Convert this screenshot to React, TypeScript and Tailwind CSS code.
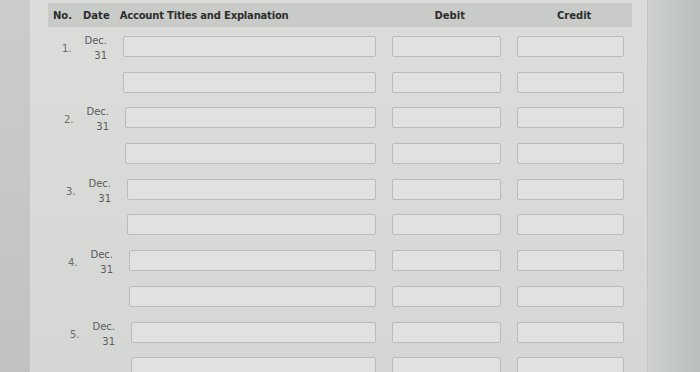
import React from "react";

type Entry = { no: string; shift: string; acct: string };

// the photo is slightly skewed: lower rows start a few px further right
const entries: Entry[] = [
  { no: "1.", shift: "pl-0", acct: "w-[253px]" },
  { no: "2.", shift: "pl-[2px]", acct: "w-[251px]" },
  { no: "3.", shift: "pl-[4px]", acct: "w-[249px]" },
  { no: "4.", shift: "pl-[6px]", acct: "w-[247px]" },
  { no: "5.", shift: "pl-[8px]", acct: "w-[245px]" },
];

function Box({ w }: { w: string }) {
  return (
    <div
      className={`${w} h-[21px] shrink-0 rounded-[2px] border border-[#b9bcb8] bg-[#e1e2df]`}
    />
  );
}

function Line({ entry, first }: { entry: Entry; first: boolean }) {
  return (
    <div className="flex h-[35.7px] items-start">
      <div className={`flex shrink-0 items-start ${entry.shift}`}>
        <div className="w-[39px] pt-[8px] pl-[31px] text-[10px] text-[#6a6c6a]">
          {first ? entry.no : ""}
        </div>
        <div className="flex w-[37px] flex-col items-end text-[10px] leading-[15px] text-[#5a5c5a]">
          {first && (
            <>
              <span>Dec.</span>
              <span>31</span>
            </>
          )}
        </div>
        <div className="ml-[16px] mt-[3px]">
          <Box w={entry.acct} />
        </div>
      </div>
      <div className="ml-[16px] mt-[3px] flex gap-[16px]">
        <Box w="w-[109px]" />
        <Box w="w-[107px]" />
      </div>
    </div>
  );
}

export default function App() {
  return (
    <div
      className="flex h-[372px] w-[700px] overflow-hidden bg-[#c6c9c7]"
      style={{ fontFamily: '"DejaVu Sans", Verdana, sans-serif' }}
    >
      {/* left bezel */}
      <div className="w-[31px] shrink-0 bg-gradient-to-b from-[#cbcdcb] to-[#bfc2c0] border-r border-[#dadbd8]" />

      {/* form panel */}
      <div className="w-[617px] shrink-0 bg-gradient-to-b from-[#dcdddb] to-[#d5d7d4] pl-[17px] border-r border-[#c2c5c2]">
        <div className="mt-[3px] flex h-[24px] w-[584px] items-center bg-[#c9cbc8] text-[10px] font-bold text-[#2c2d2c]">
          <span className="ml-[5px]">No.</span>
          <span className="ml-[11px]">Date</span>
          <span className="ml-[10px] tracking-[-0.2px]">Account Titles and Explanation</span>
          <span className="ml-[146px]">Debit</span>
          <span className="ml-[92px]">Credit</span>
        </div>
        <div className="mt-[6px] -ml-[17px]">
          {entries.map((e) => (
            <React.Fragment key={e.no}>
              <Line entry={e} first={true} />
              <Line entry={e} first={false} />
            </React.Fragment>
          ))}
        </div>
      </div>

      {/* right side */}
      <div className="flex-1 bg-gradient-to-r from-[#cdd0ce] to-[#b9bebc]" />
    </div>
  );
}
